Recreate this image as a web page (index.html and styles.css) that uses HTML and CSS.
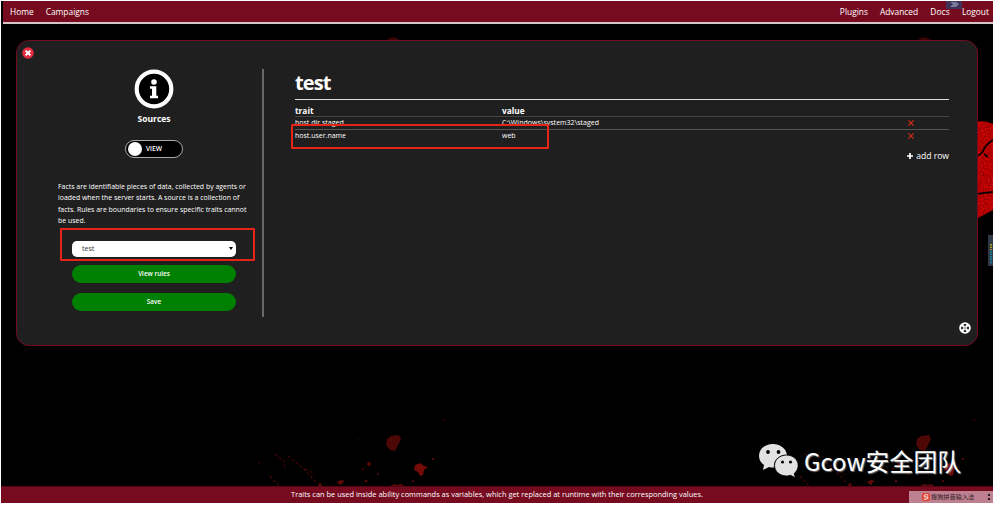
FILE: index.html
```html
<!DOCTYPE html>
<html lang="en">
<head>
<meta charset="utf-8">
<title>Sources</title>
<link rel="stylesheet" href="styles.css">
</head>
<body>
<div class="app">
  <svg class="backdrop" viewBox="0 0 992 502" aria-hidden="true">
    <defs>
      <filter id="grain" x="0" y="0" width="100%" height="100%">
        <feTurbulence type="fractalNoise" baseFrequency=".55" numOctaves="3" seed="4" result="n"/>
        <feColorMatrix in="n" values="0 0 0 0 .15  0 0 0 0 0  0 0 0 0 0  1.8 0 0 0 -.65" result="m"/>
        <feComposite in="m" in2="SourceGraphic" operator="in" result="d"/>
        <feMerge><feMergeNode in="SourceGraphic"/><feMergeNode in="d"/></feMerge>
      </filter>
      <g id="splatter">
        <path d="M386 438l4-3 8-1 2 4-3 6-3 6-5-1-4-5z" fill="#4d0805"/>
        <path d="M414 464l5-2 4 3 4 1-4 3-1 5-3 1-2-4-4-2z" fill="#730b07"/>
        <g fill="#600a06">
          <circle cx="368" cy="463" r="1.9"/><circle cx="432" cy="458" r="1.1"/><circle cx="362" cy="468" r=".9"/>
          <path d="M336 481l4-2 4 1-3 2v2l-3-1zM389 485l4-2 3 1 5-1 2 2z"/>
          <circle cx="365" cy="480" r="1.2"/><circle cx="377" cy="473" r="1"/><circle cx="412" cy="480" r="1"/><circle cx="319" cy="484" r="1.8"/>
          <circle cx="443" cy="419" r="1" opacity=".5"/><circle cx="357" cy="438" r=".8" opacity=".5"/><circle cx="258" cy="462" r="1" opacity=".5"/>
        </g>
        <path d="M274 453l9 7 1 9M287 455l15 12 14 15M269 475l9 10M304 468l10 5" fill="none" stroke="#420604" stroke-width="1.2" stroke-dasharray="3 2"/>
      </g>
    </defs>
    <use href="#splatter"/>
    <use href="#splatter" x="530"/>
    <path d="M386 39q4-4 9-2l4 2zM917 39q4-4 9-2l4 2z" fill="#3c0505"/>
    <path d="M975 121q8-2 17 2v86l-17 9z" fill="#c90b0e" filter="url(#grain)"/>
    <path d="M975 156q6-3 8-8t9-9M975 193l17-2M983 153l4 3" fill="none" stroke="#120000" stroke-width="2"/>
  </svg>

  <header class="topbar">
    <nav class="nav"><a class="home">Home</a><a class="campaigns">Campaigns</a></nav>
    <nav class="nav right"><a class="plugins">Plugins</a><a class="advanced">Advanced</a><a class="docs">Docs</a><a class="logout">Logout</a></nav>
    <svg class="tab" viewBox="0 0 16 8"><path d="M0 0h16v8H0z" fill="#3f3158"/><path d="M4 1h6l3 2-3 3H4l3-3z" fill="#777c9f"/></svg>
  </header>

  <main class="panel">
    <svg class="close" viewBox="0 0 12 12"><circle cx="6" cy="6" r="5.8" fill="#e42c40"/><path d="M3.6 3.6l4.8 4.8M8.4 3.6L3.6 8.4" stroke="#fff" stroke-width="2"/></svg>
    <aside class="side">
      <svg class="info" viewBox="0 0 40 40"><circle cx="20" cy="20" r="17.3" fill="#000" stroke="#fff" stroke-width="4.2"/><circle cx="20" cy="13" r="2.8" fill="#fff"/><path d="M16 17.3h6.300v9.500H24v2.500h-8v-2.500h2v-7h-2z" fill="#fff"/></svg>
      <h2 class="name">Sources</h2>
      <div class="switch"><span class="knob"></span><span class="mode">VIEW</span></div>
      <p class="about">Facts are identifiable pieces of data, collected by agents or<br>loaded when the server starts. A source is a collection of<br>facts. Rules are boundaries to ensure specific traits cannot<br>be used.</p>
      <div class="select"><span>test</span><i class="arrow"></i></div>
      <button class="btn">View rules</button>
      <button class="btn">Save</button>
    </aside>
    <section class="facts">
      <h1 class="title">test</h1>
      <div class="row head"><span>trait</span><span>value</span></div>
      <div class="row"><span>host.dir.staged</span><span class="path">C:\Windows\system32\staged</span><svg class="del" viewBox="0 0 6 6"><path d="M.4.4l5.2 5.2M5.6.4L.4 5.6"/></svg></div>
      <div class="row last"><span>host.user.name</span><span>web</span><svg class="del" viewBox="0 0 6 6"><path d="M.4.4l5.2 5.2M5.6.4L.4 5.6"/></svg></div>
      <div class="add"><svg class="plus" viewBox="0 0 6 6"><path d="M3 0v6M0 3h6"/></svg><span>add row</span></div>
    </section>
    <svg class="grip" viewBox="0 0 12 12"><circle cx="6" cy="6" r="5.8" fill="#fff"/><g fill="#1f1f1f"><path d="M4.300 2.800L6 1.800l1.700 1L6 4.600zM4.300 9.200L6 10.200l1.700-1L6 7.400zM2.800 4.300L1.800 6l1 1.700L4.600 6zM9.200 4.300l1 1.700-1 1.700L7.400 6z"/><circle cx="6" cy="6" r=".7"/></g></svg>
  </main>

  <div class="mark mark-source"></div>
  <div class="mark mark-row"></div>

  <svg class="meter" viewBox="0 0 5 31"><path d="M0 0h5v31H0z" fill="#303a46"/><path d="M3 9v6" stroke="#a49a20" stroke-width="2" stroke-dasharray="1.5 1"/><path d="M3 16v13" stroke="#167c9c" stroke-width="2" stroke-dasharray="1.5 1"/></svg>

  <div class="watermark">
    <svg class="wechat" viewBox="0 0 40 34">
      <path d="M14 0C6 0 0 5 0 12c0 4 2 7 5 9l-1 5 6-3c2 .6 3 .6 5 .5-1-7 5-13 13-12.500C27 4 21 0 14 0z" fill="#e2e2e2"/>
      <path d="M27.500 11C21 11 15.500 15.500 15.500 21.500S21 32 27.500 32c1.500 0 3-.3 4-.7l5 2.500-1.300-4.300c2.500-2 4-4.800 4-8C39.200 15.500 34 11 27.500 11z" fill="#e2e2e2" stroke="#000" stroke-width=".9"/>
      <g fill="#050505"><circle cx="9" cy="8" r="1.9"/><circle cx="19.500" cy="8" r="1.900"/><circle cx="23.500" cy="18" r="1.600"/><circle cx="31.500" cy="18" r="1.600"/></g>
    </svg>
    <span>Gcow安全团队</span>
  </div>

  <footer class="footer"><span>Traits can be used inside ability commands as variables, which get replaced at runtime with their corresponding values.</span></footer>
  <div class="ime">
    <svg class="sogou" viewBox="0 0 8 8"><rect width="8" height="8" rx="2" fill="#e0402c"/><path d="M6.300 2Q2 1.200 2 2.900T4.300 4 6 5.200 1.700 6" fill="none" stroke="#fff"/></svg>
    <span>搜狗拼音输入法</span>
    <i class="ime-dots"></i>
  </div>
</div>
</body>
</html>
```
FILE: styles.css
```css
* { box-sizing: border-box; }
body { margin: 0; background: #fff; font-family: "Open Sans", "Noto Sans CJK SC", sans-serif; color: #fff; }
.app { position: relative; width: 992px; height: 502px; margin: 1px 0 0 1px; background: #000; overflow: hidden; display: flex; flex-direction: column; }
.backdrop { position: absolute; left: 0; top: 0; width: 992px; height: 502px; }

.topbar { position: relative; height: 23px; margin-left: 2px; padding: 0 4px 0 7px; display: flex; justify-content: space-between; background: #760b20; border-bottom: 2px solid #d5c5c8; font-size: 8.4px; line-height: 22px; flex: none; }
.nav { display: flex; gap: 12px; white-space: nowrap; }
.nav a { position: relative; z-index: 1; }
.docs { letter-spacing: .15px; }
.tab { position: absolute; left: 943px; top: 0; width: 16px; height: 8px; z-index: 0; }

.panel { position: relative; display: flex; width: 962px; height: 306px; margin: 16px 0 0 15px; background: #1f1f1f; border: 1px solid #730b22; border-radius: 13px; flex: none; }
.close { position: absolute; left: 5px; top: 6px; width: 12px; height: 12px; }
.grip { position: absolute; right: 6px; bottom: 11px; width: 12px; height: 12px; }

.side { width: 247px; height: 248px; margin-top: 28px; padding-left: 29px; border-right: 2px solid #686868; display: flex; flex-direction: column; align-items: center; }
.info { width: 40px; height: 40px; flex: none; }
.name { margin: 3px 0 0; font-size: 8.5px; line-height: 14px; font-weight: 700; }
.switch { width: 58px; height: 18px; margin-top: 14px; padding-left: 2px; display: flex; align-items: center; gap: 4px; background: #000; border: 1px solid #aaa; border-radius: 9px; flex: none; }
.knob { width: 14px; height: 14px; border-radius: 50%; background: #fff; }
.mode { font-size: 6.6px; font-weight: 600; line-height: 16px; }
.about { width: 192px; margin: 23px 0 0; font-size: 6.95px; line-height: 11.4px; white-space: nowrap; }
.select { width: 164px; height: 16px; margin-top: 14px; padding: 0 3px 0 10px; display: flex; align-items: center; justify-content: space-between; border-radius: 5px; background: #fff; color: #333; font-size: 7px; flex: none; }
.arrow { width: 0; height: 0; border: 2px solid transparent; border-top: 3px solid #000; border-bottom: 0; }
.btn { width: 164px; height: 18px; margin: 8px 0 0; padding: 0; border: 0; border-radius: 9px; background: #008000; color: #fff; font: 600 6.4px/18px "Open Sans", sans-serif; flex: none; }
.btn + .btn { margin-top: 10px; }

.facts { width: 654px; margin: 28px 0 0 31px; }
.title { margin: 0; height: 31px; font-size: 20px; line-height: 27px; font-weight: 700; letter-spacing: -.9px; border-bottom: 1.5px solid #ddd; }
.row { height: 13px; display: grid; grid-template-columns: 207px 406px 1fr; align-items: center; border-bottom: 1px solid #555; font-size: 7px; line-height: 12px; }
.head { height: 17px; padding-top: 5px; font-size: 8.3px; line-height: 11px; font-weight: 700; border-color: #444; }
.path { letter-spacing: .02px; }
.last { height: 18px; padding-bottom: 5px; border-color: transparent; }
.del { width: 6px; height: 6px; fill: none; stroke: #d52b14; stroke-width: 1.2; }
.add { display: flex; justify-content: flex-end; align-items: center; gap: 3px; height: 16px; font-size: 8.6px; }
.plus { width: 6px; height: 6px; stroke: #fff; stroke-width: 1.7; }

.mark { position: absolute; border: 2px solid #e62417; border-radius: 1px; }
.mark-source { left: 59px; top: 227px; width: 195px; height: 33px; }
.mark-row { left: 290px; top: 123px; width: 258px; height: 25px; }
.meter { position: absolute; left: 987px; top: 234px; width: 5px; height: 31px; }

.watermark { position: absolute; left: 758px; top: 442px; display: flex; align-items: center; gap: 5px; font: 23.9px/36px "Noto Sans CJK SC", sans-serif; white-space: nowrap; text-shadow: 1px 1px 1px #777; }
.wechat { width: 40px; height: 34px; }

.footer { height: 17px; margin-top: auto; background: #760b20; border-top: 1px solid #500816; text-align: center; font-size: 7.44px; line-height: 15px; position: relative; flex: none; white-space: nowrap; }
.ime { position: absolute; left: 908px; top: 490px; width: 84px; height: 12px; padding: 0 3px 0 13px; display: flex; align-items: center; background: #bd8090; color: #2b1720; font: 6.2px/12px "Noto Sans CJK SC", sans-serif; white-space: nowrap; }
.sogou { width: 8px; height: 8px; margin-right: 1px; }
.ime-dots { width: 2px; height: 6px; margin-left: auto; border-top: 2px solid #222; border-bottom: 2px solid #222; }
```
